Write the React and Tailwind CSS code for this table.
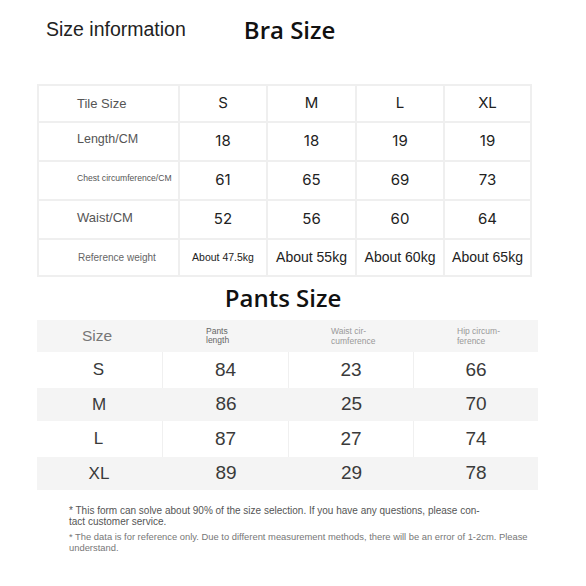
import React from 'react';

const braCols = ['S', 'M', 'L', 'XL'];
const braRows = [
  { label: 'Length/CM', size: 'text-[12.5px]', values: ['18', '18', '19', '19'] },
  { label: 'Chest circumference/CM', size: 'text-[8.6px]', values: ['61', '65', '69', '73'] },
  { label: 'Waist/CM', size: 'text-[13px]', values: ['52', '56', '60', '64'] },
];
const weights = ['About 55kg', 'About 60kg', 'About 65kg'];

const pantsRows = [
  ['S', '84', '23', '66'],
  ['M', '86', '25', '70'],
  ['L', '87', '27', '74'],
  ['XL', '89', '29', '78'],
];

const sans = "font-['Liberation_Sans',Arial,sans-serif]";
const geo = "font-['Inter','Noto_Sans',sans-serif]";
const title = "font-['Open_Sans','Noto_Sans',sans-serif]";

const Cell = ({ children, className = '' }) => (
  <td className={'border-2 border-[#efefef] ' + className}>{children}</td>
);

const App = () => {
  return (
    <div className="w-[586px] h-[586px] bg-white overflow-hidden">
      {/* top heading */}
      <div className="flex items-center h-[60px] pl-[46px]">
        <span className={sans + ' text-[19.5px] text-[#222]'}>Size information</span>
        <span className={title + ' ml-[58px] text-[24px] font-semibold text-[#111]'}>Bra Size</span>
      </div>

      {/* bra table */}
      <div className="pl-[37px] pt-[24px]">
        <table className="table-fixed border-collapse w-[493px]">
          <colgroup>
            <col className="w-[141px]" />
            <col className="w-[88px]" />
            <col className="w-[89px]" />
            <col className="w-[88px]" />
            <col className="w-[87px]" />
          </colgroup>
          <tbody>
            <tr className="h-[37px]">
              <Cell className={sans + ' pl-[38px] text-[13px] text-[#555]'}>Tile Size</Cell>
              {braCols.map(c => (
                <Cell key={c} className={geo + ' text-center text-[15px] text-[#222]'}>{c}</Cell>
              ))}
            </tr>
            {braRows.map(r => (
              <tr key={r.label} className="h-[39px]">
                <Cell className={sans + ' pl-[38px] pb-[4px] text-[#555] ' + r.size}>{r.label}</Cell>
                {r.values.map((v, i) => (
                  <Cell key={i} className={geo + ' text-center text-[15px] text-[#222]'}>{v}</Cell>
                ))}
              </tr>
            ))}
            <tr className="h-[37px]">
              <Cell className={sans + ' pl-[39px] text-[10px] text-[#666]'}>Reference weight</Cell>
              <Cell className={sans + ' text-center text-[10.5px] text-[#222]'}>About 47.5kg</Cell>
              {weights.map(w => (
                <Cell key={w} className={sans + ' text-center text-[14px] text-[#222]'}>{w}</Cell>
              ))}
            </tr>
          </tbody>
        </table>
      </div>

      {/* pants title */}
      <div className={title + ' text-center pr-[20px] mt-[5px] text-[24px] font-semibold text-[#111] leading-[32px]'}>
        Pants Size
      </div>

      {/* pants table */}
      <div className="ml-[37px] mt-[6px] w-[501px]">
        <div className="grid grid-cols-[126px_126px_125px_124px] h-[32px] bg-[#f5f5f5] items-center">
          <span className={sans + ' pl-[45px] text-[15.5px] text-[#777]'}>Size</span>
          <span className={sans + ' pl-[43px] text-[8.5px] leading-[9px] text-[#666]'}>Pants<br />length</span>
          <span className={sans + ' pl-[42px] text-[8.5px] leading-[10px] text-[#999]'}>Waist cir-<br />cumference</span>
          <span className={sans + ' pl-[43px] text-[8.5px] leading-[10px] text-[#999]'}>Hip circum-<br />ference</span>
        </div>
        {pantsRows.map((r, i) => (
          <div
            key={r[0]}
            className={
              'grid grid-cols-[126px_126px_125px_124px] ' +
              (i % 2 === 0 ? 'h-[36px] bg-white' : 'h-[33px] bg-[#f4f4f4]')
            }
          >
            {r.map((v, j) => (
              <div
                key={j}
                className={
                  sans +
                  ' flex items-center justify-center text-[#3a3a3a] ' +
                  (j === 0 ? 'text-[17px] pr-[2px]' : 'text-[19px]') +
                  (i % 2 === 0 && j < 3 ? ' border-r border-[#f0f0f0]' : '')
                }
              >
                {v}
              </div>
            ))}
          </div>
        ))}
      </div>

      {/* notes */}
      <div className={sans + ' pl-[69px] mt-[15px] pr-[40px]'}>
        <p className="text-[10px] leading-[11px] text-[#555]">
          * This form can solve about 90% of the size selection. If you have any questions, please con-<br />tact customer service.
        </p>
        <p className="mt-[4px] text-[9.4px] leading-[11px] text-[#777]">
          * The data is for reference only. Due to different measurement methods, there will be an error of 1-2cm. Please<br />understand.
        </p>
      </div>
    </div>
  );
};

export default App;
